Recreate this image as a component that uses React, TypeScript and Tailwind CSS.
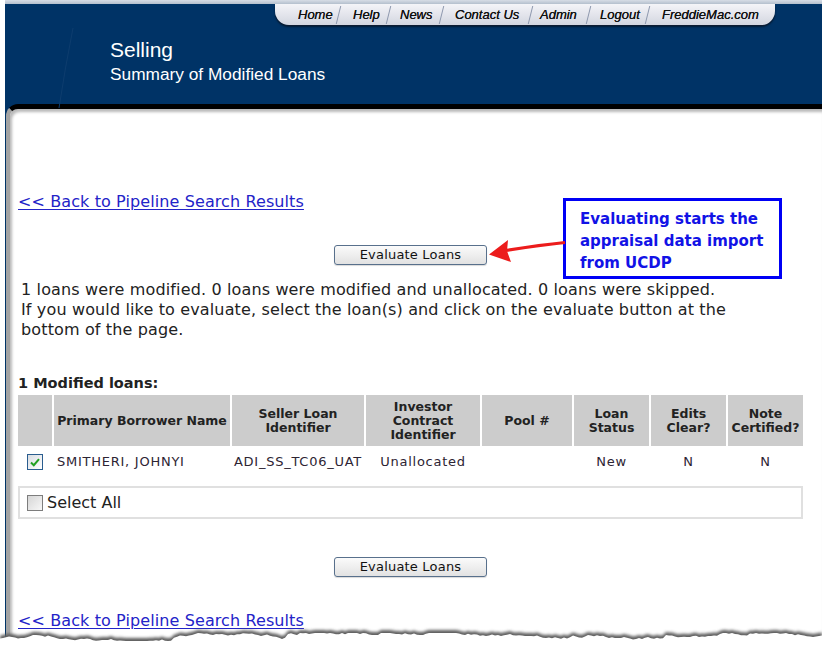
import React from 'react';

const navLinks = [
  { label: 'Home', cls: 'w-[63px] pl-[23px]' },
  { label: 'Help', cls: 'w-[49px] pl-[14px]' },
  { label: 'News', cls: 'w-[52px] pl-[11px]' },
  { label: 'Contact Us', cls: 'w-[88px] pl-[13px]' },
  { label: 'Admin', cls: 'w-[57px] pl-[9px]' },
  { label: 'Logout', cls: 'w-[58px] pl-[11px]' },
  { label: 'FreddieMac.com', cls: 'w-[127px] pl-[14px]' },
];

const tableCols = 'grid grid-cols-[34px_176px_132px_114px_90px_75px_75px_75px] gap-x-[2px]';

const headers = [
  '',
  'Primary Borrower Name',
  'Seller Loan\nIdentifier',
  'Investor\nContract\nIdentifier',
  'Pool #',
  'Loan\nStatus',
  'Edits\nClear?',
  'Note\nCertified?',
];

const loans = [
  {
    name: 'SMITHERI, JOHNYI',
    sellerId: 'ADI_SS_TC06_UAT',
    contract: 'Unallocated',
    pool: '',
    status: 'New',
    editsClear: 'N',
    certified: 'N',
  },
];

function CheckBox({ checked }: { checked?: boolean }) {
  if (checked) {
    return (
      <span className="w-[16px] h-[16px] border border-[#2a5d8f] bg-gradient-to-br from-[#d9dde2] to-white flex items-center justify-center">
        <svg width="10" height="9" viewBox="0 0 10 9">
          <path d="M1 4.5 L3.8 7.2 L9 1.2" fill="none" stroke="#22a022" strokeWidth="2" />
        </svg>
      </span>
    );
  }
  return (
    <span className="w-[16px] h-[16px] border border-[#7d7d7d] bg-gradient-to-br from-[#d6d6d6] to-[#f7f7f7] block" />
  );
}

function EvaluateButton() {
  return (
    <div className="w-[785px] flex justify-center">
      <button className="w-[153px] h-[20px] rounded-[3px] border border-[#58708c] bg-gradient-to-b from-[#fbfbfb] to-[#e2e2e2] text-[13px] leading-[18px] text-[#111] tracking-[0.2px] shadow-[0_1px_1px_rgba(0,0,0,0.15)]">
        Evaluate Loans
      </button>
    </div>
  );
}

function BackLink() {
  return (
    <a className="block w-max text-[16px] leading-[18px] tracking-[0.1px] text-[#2323c8] underline underline-offset-[2px] decoration-[1px]">
      &lt;&lt; Back to Pipeline Search Results
    </a>
  );
}

// ragged bottom edge of the page capture
function tornEdge(offset: number) {
  let seed = 11;
  const rnd = () => {
    seed = (seed * 9301 + 49297) % 233280;
    return seed / 233280;
  };
  const pts: string[] = [];
  let y = 8;
  for (let x = 0; x <= 824; x += 3) {
    y += (rnd() - 0.5) * 2.6;
    if (rnd() > 0.93) y -= 2.5;
    y = Math.max(3, Math.min(11, y));
    pts.push(`${x},${(y + offset).toFixed(1)}`);
  }
  return `M0,30 L${pts.join(' L')} L824,30 Z`;
}

export default function App() {
  return (
    <div className="w-[822px] h-[651px] overflow-hidden bg-white relative font-[DejaVu_Sans,Verdana,sans-serif]">
      <div className="ml-[5px] h-[4px] bg-gradient-to-b from-[#d7dde6] to-[#b4bfcd]" />
      <div className="ml-[5px] bg-[#003366]">
        <header className="h-[100px] flex flex-col font-[Liberation_Sans,Arial,sans-serif] relative">
          <svg className="absolute left-[48px] top-[24px]" width="24" height="80" viewBox="0 0 24 80">
            <path d="M20 0 Q12 40 6 80" fill="none" stroke="#0d3d6e" strokeWidth="1" />
          </svg>
          <nav className="ml-[270px] w-[500px] h-[21px] flex items-center rounded-b-[14px] bg-gradient-to-b from-[#f4f4f8] to-[#d3d6e0] shadow-[0_1px_0_#0d1c33,0_2px_2px_rgba(0,0,0,0.5)] text-[13px] italic text-[#111] [text-shadow:0_0_0.5px_#111]">
            {navLinks.map((link, i) => (
              <React.Fragment key={link.label}>
                {i > 0 && <span className="w-px h-[18px] bg-[#8e98ae] -skew-x-[14deg]" />}
                <span className={`${link.cls} whitespace-nowrap`}>{link.label}</span>
              </React.Fragment>
            ))}
          </nav>
          <div className="pl-[105px] mt-[13px] text-white">
            <div className="text-[21px] leading-[24px]">Selling</div>
            <div className="text-[17.3px] leading-[20px] mt-[2px]">Summary of Modified Loans</div>
          </div>
        </header>

        <main className="ml-[1px] h-[547px] bg-white rounded-tl-[12px] border-t-[5px] border-l-[4px] border-t-black border-l-[#a3a3a3] shadow-[inset_2px_3px_3px_rgba(0,0,0,0.28)] pl-[8px] pt-[84px] text-[#222]">
          <BackLink />

          <div className="mt-[34px]">
            <EvaluateButton />
          </div>

          <p className="mt-[15px] text-[16px] leading-[20px] tracking-[0.14px] whitespace-nowrap pl-[3px]">
            1 loans were modified. 0 loans were modified and unallocated. 0 loans were skipped.
            <br />
            If you would like to evaluate, select the loan(s) and click on the evaluate button at the
            <br />
            bottom of the page.
          </p>

          <h2 className="mt-[33px] text-[14.5px] leading-[20px] font-bold">1 Modified loans:</h2>

          <div className="mt-[2px] w-[785px]">
            <div className={tableCols}>
              {headers.map((h, i) => (
                <div
                  key={i}
                  className="h-[51px] bg-[#cccccc] flex items-center justify-center text-center font-bold text-[12.5px] leading-[14px] whitespace-pre-line"
                >
                  {h}
                </div>
              ))}
            </div>
            {loans.map((loan) => (
              <div key={loan.sellerId} className={`${tableCols} h-[32px] items-center text-[13px] tracking-[0.75px] text-[#2d2433]`}>
                <div className="flex justify-center">
                  <CheckBox checked />
                </div>
                <div className="pl-[3px]">{loan.name}</div>
                <div className="text-center">{loan.sellerId}</div>
                <div className="text-center">{loan.contract}</div>
                <div className="text-center">{loan.pool}</div>
                <div className="text-center">{loan.status}</div>
                <div className="text-center">{loan.editsClear}</div>
                <div className="text-center">{loan.certified}</div>
              </div>
            ))}
          </div>

          <div className="mt-[8px] w-[785px] h-[33px] border-2 border-[#e0e0e0] flex items-center pl-[7px] gap-[4px] text-[16px]">
            <CheckBox />
            <span>Select All</span>
          </div>

          <div className="mt-[38px]">
            <EvaluateButton />
          </div>

          <div className="mt-[35px]">
            <BackLink />
          </div>
        </main>
      </div>

      {/* callout */}
      <div className="absolute left-[563px] top-[198px] w-[219px] h-[81px] border-[3px] border-[#0000f5] bg-white pl-[14px] pt-[7px] text-[15px] leading-[22px] font-bold text-[#1212e6]">
        Evaluating starts the
        <br />
        appraisal data import
        <br />
        from UCDP
      </div>
      <svg className="absolute left-[480px] top-[230px]" width="90" height="40" viewBox="480 230 90 40">
        <path d="M565 242.5 Q540 245 506 250.5" fill="none" stroke="#ec1c1c" strokeWidth="3.2" />
        <polygon points="489,254.5 508,240 507,251 511,262" fill="#ec1c1c" />
      </svg>

      {/* torn bottom */}
      <svg className="absolute left-0 top-[627px]" width="822" height="24" viewBox="0 0 822 24">
        <defs>
          <filter id="tear-shadow" x="-5%" y="-50%" width="110%" height="200%">
            <feGaussianBlur stdDeviation="1.4" />
          </filter>
        </defs>
        <path d={tornEdge(0)} fill="#5e5e5e" filter="url(#tear-shadow)" />
        <path d={tornEdge(3)} fill="#ffffff" />
      </svg>
    </div>
  );
}
